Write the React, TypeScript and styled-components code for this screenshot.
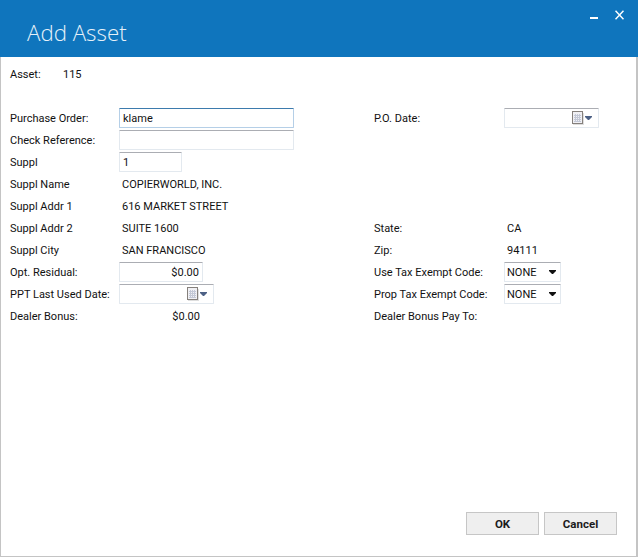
import React from "react";
import styled, { createGlobalStyle } from "styled-components";

const Global = createGlobalStyle`
  html, body { margin: 0; padding: 0; background: #fff; }
  body { font-family: Roboto, "Liberation Sans", Arial, sans-serif; font-size: 11px; color: #111; }
`;

const Window = styled.div`
  width: 638px;
  height: 557px;
  box-sizing: border-box;
  display: flex;
  flex-direction: column;
  background: #fff;
  border-left: 1px solid #c4c4c4;
  border-right: 2px solid #c4c4c4;
  border-bottom: 1px solid #c4c4c4;
`;

const TitleBar = styled.header`
  height: 57px;
  margin: 0 -2px 0 -1px;
  flex: none;
  display: flex;
  justify-content: space-between;
  background: #0f75bd;
  color: #fff;
`;

const Title = styled.h1`
  margin: 0;
  padding: 16px 0 0 27px;
  font-family: "Open Sans", sans-serif;
  font-size: 22.3px;
  line-height: 33px;
  font-weight: 300;
  color: #e6f1f9;
`;

const Controls = styled.div`
  display: flex;
  align-items: flex-start;
  gap: 17px;
  padding: 10px 14px 0 0;
`;

const Body = styled.main`
  flex: 1;
  display: flex;
  flex-direction: column;
  padding: 6px 0 0 9px;
`;

const AssetRow = styled.div`
  display: grid;
  grid-template-columns: 53px auto;
  align-items: center;
  height: 22px;
  margin-bottom: 22px;
`;

const Row = styled.div`
  display: grid;
  grid-template-columns: 109px 255px 130px 1fr;
  align-items: center;
  height: 22px;
`;

const Label = styled.span`
  white-space: nowrap;
`;

const Value = styled.span<{ $width?: number }>`
  box-sizing: border-box;
  padding: 0 3px;
  white-space: nowrap;
  width: ${(p) => (p.$width ? `${p.$width}px` : "auto")};
  text-align: ${(p) => (p.$width ? "right" : "left")};
`;

const Input = styled.input<{ $width: number; $focus?: boolean; $right?: boolean }>`
  box-sizing: border-box;
  display: block;
  width: ${(p) => p.$width}px;
  height: 20px;
  padding: 0 3px;
  margin: 0;
  font: inherit;
  color: inherit;
  outline: none;
  background: #fff;
  border-radius: 1px;
  text-align: ${(p) => (p.$right ? "right" : "left")};
  border: 1px solid ${(p) => (p.$focus ? "#b5cfe7" : "#e3e9ef")};
  border-top-color: ${(p) => (p.$focus ? "#3d7bad" : "#abadb3")};
`;

const DateBox = styled.div`
  box-sizing: border-box;
  width: 95px;
  height: 20px;
  display: flex;
  align-items: center;
  justify-content: flex-end;
  gap: 1px;
  padding-right: 6px;
  background: #fff;
  border: 1px solid #e3e9ef;
  border-top-color: #abadb3;
  border-radius: 1px;
`;

const SelectBox = styled.div`
  box-sizing: border-box;
  width: 57px;
  height: 20px;
  display: flex;
  align-items: center;
  justify-content: space-between;
  padding: 0 4px 0 2px;
  background: #fff;
  border: 1px solid #e3e9ef;
  border-top-color: #abadb3;
  border-radius: 1px;
`;

const Footer = styled.footer`
  margin-top: auto;
  display: flex;
  justify-content: flex-end;
  gap: 5px;
  padding: 0 19px 21px 0;
`;

const Button = styled.button`
  box-sizing: border-box;
  width: 73px;
  height: 23px;
  padding: 0;
  font-family: Roboto, "Liberation Sans", Arial, sans-serif;
  font-size: 11.5px;
  font-weight: 700;
  color: #1c1c1c;
  background: #efefef;
  border: 1.5px solid #c6c6c6;
`;

const CalendarIcon = () => (
  <svg width="12" height="14" viewBox="0 0 12 14">
    <rect x="1" y="2" width="11" height="12" fill="#dedede" />
    <rect x="0.5" y="0.5" width="10" height="12" fill="#f0f0f4" stroke="#85807c" />
    <path d="M2 4.5h7M2 6.5h7M2 8.5h7M2 10.5h7M3.5 3v8M5.5 3v8M7.5 3v8" stroke="#c3c8d6" strokeWidth="1" fill="none" />
  </svg>
);

const DropCaret = ({ color }: { color: string }) => (
  <svg width="7" height="4" viewBox="0 0 7 4">
    <path d="M0 0h7v1L4 4H3L0 1z" fill={color} />
  </svg>
);

const DateField = () => (
  <DateBox>
    <CalendarIcon />
    <DropCaret color="#4d6185" />
  </DateBox>
);

const Select = () => (
  <SelectBox>
    <span>NONE</span>
    <DropCaret color="#111" />
  </SelectBox>
);

export default function App() {
  return (
    <Window>
      <Global />
      <TitleBar>
        <Title>Add Asset</Title>
        <Controls>
          <svg width="8" height="10" viewBox="0 0 8 10">
            <rect x="0" y="7" width="8" height="2" fill="#fff" />
          </svg>
          <svg width="9" height="10" viewBox="0 0 9 10">
            <path d="M0.5 0.8L8.5 9.2M8.5 0.8L0.5 9.2" stroke="#fff" strokeWidth="1.5" fill="none" />
          </svg>
        </Controls>
      </TitleBar>
      <Body>
        <AssetRow>
          <Label>Asset:</Label>
          <Label>115</Label>
        </AssetRow>
        <Row>
          <Label>Purchase Order:</Label>
          <Input $width={175} $focus readOnly value="klame" />
          <Label>P.O. Date:</Label>
          <DateField />
        </Row>
        <Row>
          <Label>Check Reference:</Label>
          <Input $width={175} readOnly value="" />
        </Row>
        <Row>
          <Label>Suppl</Label>
          <Input $width={63} readOnly value="1" />
        </Row>
        <Row>
          <Label>Suppl Name</Label>
          <Value>COPIERWORLD, INC.</Value>
        </Row>
        <Row>
          <Label>Suppl Addr 1</Label>
          <Value>616 MARKET STREET</Value>
        </Row>
        <Row>
          <Label>Suppl Addr 2</Label>
          <Value>SUITE 1600</Value>
          <Label>State:</Label>
          <Value>CA</Value>
        </Row>
        <Row>
          <Label>Suppl City</Label>
          <Value>SAN FRANCISCO</Value>
          <Label>Zip:</Label>
          <Value>94111</Value>
        </Row>
        <Row>
          <Label>Opt. Residual:</Label>
          <Input $width={84} $right readOnly value="$0.00" />
          <Label>Use Tax Exempt Code:</Label>
          <Select />
        </Row>
        <Row>
          <Label>PPT Last Used Date:</Label>
          <DateField />
          <Label>Prop Tax Exempt Code:</Label>
          <Select />
        </Row>
        <Row>
          <Label>Dealer Bonus:</Label>
          <Value $width={84}>$0.00</Value>
          <Label>Dealer Bonus Pay To:</Label>
        </Row>
        <Footer>
          <Button>OK</Button>
          <Button>Cancel</Button>
        </Footer>
      </Body>
    </Window>
  );
}
